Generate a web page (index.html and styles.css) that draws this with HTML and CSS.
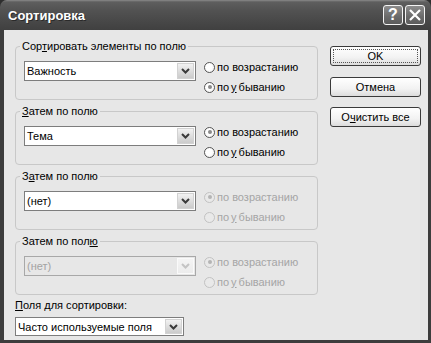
FILE: index.html
```html
<!DOCTYPE html>
<html lang="ru">
<head>
<meta charset="utf-8">
<title>Сортировка</title>
<link rel="stylesheet" href="styles.css">
</head>
<body>
<div class="window">
  <div class="titlebar">
    <span class="title">Сортировка</span>
    <div class="tbtns">
      <span class="tbtn help">?</span>
      <span class="tbtn close"><svg width="14" height="14" viewBox="0 0 14 14"><path d="M2 2L12 12M12 2L2 12" stroke="#fff" stroke-width="2.2" fill="none"/></svg></span>
    </div>
  </div>
  <div class="client">
    <div class="left">
      <div class="group">
        <div class="legend">Сор<u>т</u>ировать элементы по полю</div>
        <div class="gbody">
          <div class="combo"><span class="ctext">Важность</span><span class="arrow"><svg width="9" height="6" viewBox="0 0 9 6"><path d="M1 1L4.5 4.5L8 1" stroke="#3a3a3a" stroke-width="2" fill="none"/></svg></span></div>
          <div class="radios">
            <div class="radio"><span class="dot"></span>по возрастанию</div>
            <div class="radio checked"><span class="dot"></span>по <u>у</u>быванию</div>
          </div>
        </div>
      </div>
      <div class="group">
        <div class="legend"><u>З</u>атем по полю</div>
        <div class="gbody">
          <div class="combo"><span class="ctext">Тема</span><span class="arrow"><svg width="9" height="6" viewBox="0 0 9 6"><path d="M1 1L4.5 4.5L8 1" stroke="#3a3a3a" stroke-width="2" fill="none"/></svg></span></div>
          <div class="radios">
            <div class="radio checked"><span class="dot"></span>по возрастанию</div>
            <div class="radio"><span class="dot"></span>по <u>у</u>быванию</div>
          </div>
        </div>
      </div>
      <div class="group">
        <div class="legend">З<u>а</u>тем по полю</div>
        <div class="gbody">
          <div class="combo"><span class="ctext">(нет)</span><span class="arrow"><svg width="9" height="6" viewBox="0 0 9 6"><path d="M1 1L4.5 4.5L8 1" stroke="#3a3a3a" stroke-width="2" fill="none"/></svg></span></div>
          <div class="radios disabled">
            <div class="radio checked"><span class="dot"></span>по возрастанию</div>
            <div class="radio"><span class="dot"></span>по <u>у</u>быванию</div>
          </div>
        </div>
      </div>
      <div class="group">
        <div class="legend">Затем по пол<u>ю</u></div>
        <div class="gbody">
          <div class="combo disabled"><span class="ctext">(нет)</span><span class="arrow"><svg width="9" height="6" viewBox="0 0 9 6"><path d="M1 1L4.5 4.5L8 1" stroke="#c4c4c4" stroke-width="2" fill="none"/></svg></span></div>
          <div class="radios disabled">
            <div class="radio checked"><span class="dot"></span>по возрастанию</div>
            <div class="radio"><span class="dot"></span>по <u>у</u>быванию</div>
          </div>
        </div>
      </div>
      <div class="fieldlabel"><u>П</u>оля для сортировки:</div>
      <div class="combo small"><span class="ctext">Часто используемые поля</span><span class="arrow"><svg width="9" height="6" viewBox="0 0 9 6"><path d="M1 1L4.5 4.5L8 1" stroke="#3a3a3a" stroke-width="2" fill="none"/></svg></span></div>
    </div>
    <div class="right">
      <div class="btn default"><span class="focus">OK</span></div>
      <div class="btn">Отмена</div>
      <div class="btn clear">О<u>ч</u>истить все</div>
    </div>
  </div>
</div>
</body>
</html>
```

FILE: styles.css
```css
* { box-sizing: border-box; }
html, body { margin: 0; padding: 0; }
body {
  background: #2e2e2e;
  font-family: "Liberation Sans", Arial, sans-serif;
  font-size: 11px;
  color: #000;
}
u { text-decoration: underline; text-underline-offset: 1px; }

.window {
  width: 431px;
  height: 343px;
  display: flex;
  flex-direction: column;
}

.titlebar {
  height: 30px;
  flex: none;
  display: flex;
  align-items: center;
  justify-content: space-between;
  padding: 0 6px 0 8px;
  border-radius: 7px 7px 0 0;
  background: linear-gradient(to bottom, #8a8a8a 0, #5e5e5e 2px, #525252 35%, #484848 70%, #404040 100%);
}
.title {
  color: #fff;
  font-weight: bold;
  font-size: 13px;
  text-shadow: 1px 1px 0 #2a2a2a;
  padding-top: 1px;
}
.tbtns { display: flex; gap: 2px; }
.tbtn {
  width: 20px;
  height: 20px;
  border: 1px solid #f4f4f4;
  border-radius: 3px;
  background: linear-gradient(to bottom, #8c8c8c, #6a6a6a 60%, #5c5c5c);
  display: flex;
  align-items: center;
  justify-content: center;
  color: #fff;
  font-weight: bold;
  font-size: 16px;
  line-height: 1;
}

.client {
  flex: 1;
  background: #e7e7e7;
  border-style: solid;
  border-color: #3d3d3d;
  border-width: 0 3px 3px 4px;
  display: flex;
  padding: 0 7px 0 11px;
  gap: 12px;
}

.left {
  width: 303px;
  display: flex;
  flex-direction: column;
  padding-top: 16px;
}

.group {
  height: 54px;
  border: 1px solid #c8c8c8;
  border-radius: 4px;
  padding: 0 8px;
  display: flex;
  flex-direction: column;
  margin-bottom: 11px;
}
.group:nth-child(4) { margin-bottom: 4px; }

.legend {
  align-self: flex-start;
  margin: -7px 0 0 -4px;
  padding: 0 2px;
  height: 13px;
  line-height: 13px;
  background: #e7e7e7;
}

.gbody { display: flex; gap: 8px; }

.combo {
  width: 172px;
  height: 20px;
  margin-top: 8px;
  border: 1px solid #7d7d7d;
  background: #fff;
  display: flex;
  align-items: center;
  justify-content: space-between;
  padding: 0 1px 0 2px;
}
.ctext { line-height: 16px; }
.arrow {
  width: 17px;
  height: 16px;
  background: linear-gradient(to bottom, #f2f2f2, #dadada 60%, #cbcbcb);
  border: 1px solid #d2d2d2;
  display: flex;
  align-items: center;
  justify-content: center;
}
.combo.disabled {
  background: #e7e7e7;
  border-color: #a8a8a8;
  color: #a3a3a3;
}
.combo.disabled .arrow {
  background: linear-gradient(to bottom, #f4f4f4, #ececec);
  border-color: #fafafa;
}
.combo.small {
  width: 169px;
  height: 19px;
  margin-top: 5px;
}
.combo.small .arrow { height: 15px; }

.radios {
  margin-top: 4px;
  display: flex;
  flex-direction: column;
}
.radio {
  height: 20px;
  display: flex;
  align-items: center;
  gap: 2px;
}
.dot {
  width: 11px;
  height: 11px;
  border-radius: 50%;
  border: 1px solid #555;
  background: radial-gradient(circle at 40% 40%, #fff 40%, #ececec 100%);
  display: flex;
  align-items: center;
  justify-content: center;
}
.radio.checked .dot::after {
  content: "";
  width: 4px;
  height: 4px;
  border-radius: 50%;
  background: #8a8a8a;
}
.radios.disabled .radio { color: #a5a5a5; }
.radios.disabled .dot {
  border-color: #c2c2c2;
  background: #e9e9e9;
}
.radios.disabled .radio.checked .dot::after { background: #b4b4b4; }

.fieldlabel {
  height: 13px;
  line-height: 13px;
}

.right {
  width: 91px;
  display: flex;
  flex-direction: column;
  padding-top: 16px;
}
.btn {
  height: 20px;
  border: 1px solid #3a3a3a;
  border-radius: 3px;
  background: linear-gradient(to bottom, #ffffff, #f2f2f2 60%, #dcdcdc);
  display: flex;
  align-items: center;
  justify-content: center;
  margin-bottom: 11px;
}
.btn.clear { margin-top: -1px; }
.btn.default { padding: 2px; }
.focus {
  width: 100%;
  height: 100%;
  border: 1px dotted #555;
  display: flex;
  align-items: center;
  justify-content: center;
}
```
